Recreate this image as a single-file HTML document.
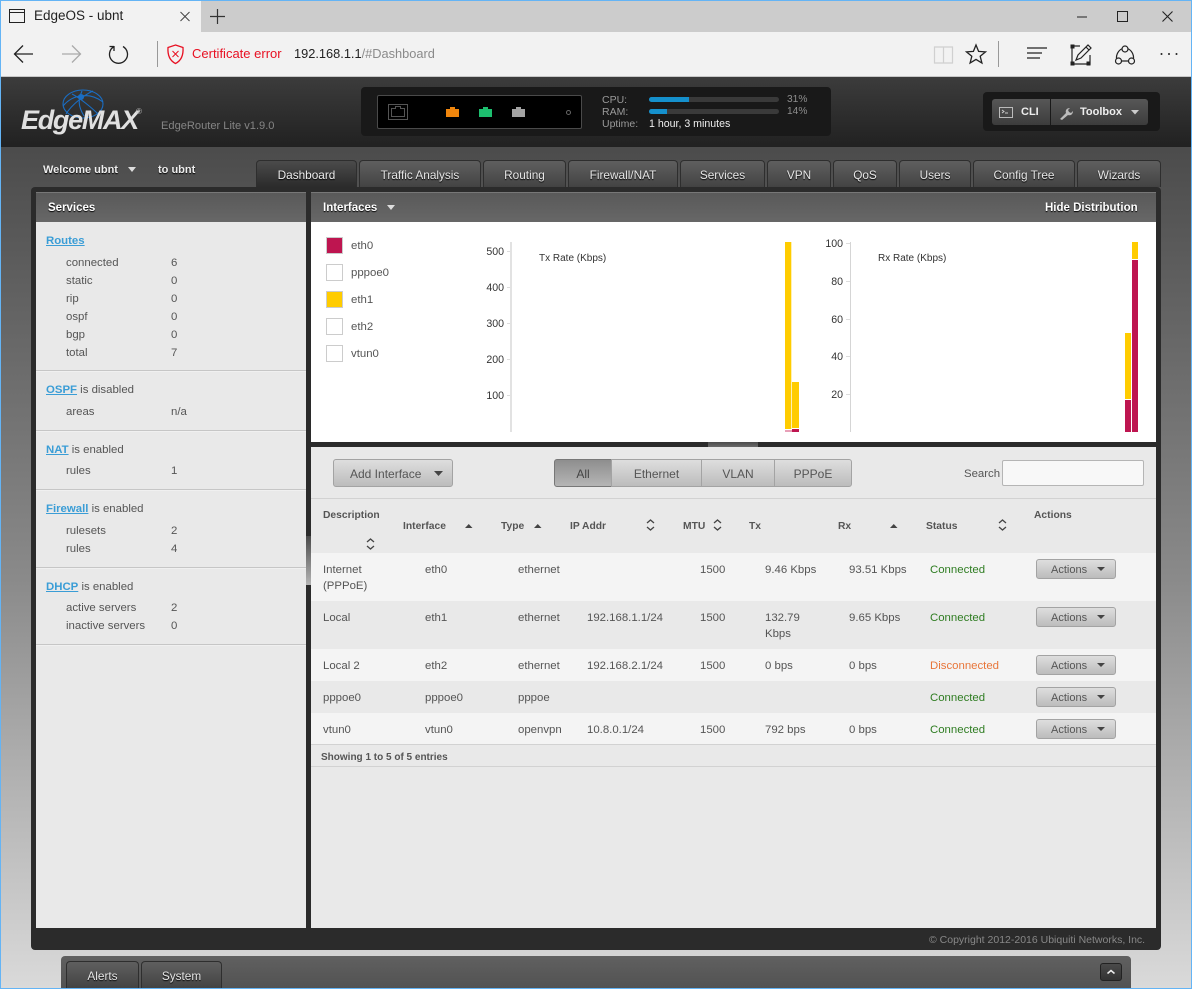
<!DOCTYPE html>
<html><head><meta charset="utf-8"><title>EdgeOS - ubnt</title>
<style>
html,body{margin:0;padding:0;width:1192px;height:989px;overflow:hidden;background:#ccc}
body{position:relative;font-family:"Liberation Sans",sans-serif;font-size:11.4px;color:#555}
div,span.t,a.t,b.t{position:absolute;box-sizing:border-box}
.t{position:absolute;white-space:nowrap;line-height:16px;height:16px;margin-top:1px}
svg{position:absolute;overflow:visible}
.tab{top:160px;height:27px;border:1px solid #2e2e2e;border-bottom:0;border-radius:4px 4px 0 0;background:linear-gradient(#5f5f5f,#434343);color:#e6e6e6;text-align:center;line-height:28px;font-size:11.8px;text-shadow:0 1px 1px #000;font-weight:normal}
.tab.on{background:linear-gradient(#4b4b4b,#2b2b2b);color:#eee}
.sep{left:36px;width:270px;height:2px;background:#c6c6c6;border-bottom:1px solid #f0f0f0}
.lnk{color:#3a9dd6;font-weight:bold;text-decoration:underline}
.btn{background:linear-gradient(#dedede,#bcbcbc);border:1px solid #a3a3a3;color:#555;text-align:center;line-height:28px;font-size:12px}
.act{left:1036px;width:80px;height:20px;border:1px solid #a3a3a3;border-radius:3px;background:linear-gradient(#dedede,#bcbcbc);color:#555;font-size:11px;line-height:20px;padding-left:14px}
.act:after{content:"";position:absolute;left:60px;top:7px;border:4.5px solid transparent;border-top:4.5px solid #444;border-bottom:0}
.h{color:#555;font-size:10.3px;font-weight:bold}
.r{height:1px}
.ax{color:#333;font-size:10.6px;text-align:right;width:30px}
.w{color:#fff}
.lg{left:326px;width:17px;height:17px;border:1px solid #ccc;background:#fff}
.gr{color:#2f7d22}
.ph{font-weight:bold;font-size:11.5px;text-shadow:0 1px 1px #000}
</style></head><body>

<!-- browser chrome -->
<div style="left:0;top:0;width:1192px;height:32px;background:#ccc"></div>
<div style="left:0;top:0;width:201px;height:32px;background:#f2f2f2"></div>
<div style="left:0;top:32px;width:1192px;height:44px;background:#f2f2f2"></div>
<div style="left:0;top:76px;width:1192px;height:1px;background:#c8c8c8"></div>
<span class="t" style="left:34px;top:7px;font-size:13.5px;color:#222">EdgeOS - ubnt</span>
<span class="t" style="left:192px;top:45px;font-size:13px;color:#e81123">Certificate error</span>
<span class="t" style="left:294px;top:45px;font-size:12.8px;color:#222">192.168.1.1<span style="color:#8a8a8a">/#Dashboard</span></span>

<!-- page -->
<div style="left:0;top:77px;width:1192px;height:912px;background:linear-gradient(#4c4c4c 0,#4c4c4c 8%,#8a8a8a 55%,#dadada 100%)"></div>
<div style="left:0;top:77px;width:1192px;height:70px;background:linear-gradient(#3c3c3c,#212121)"></div>

<!-- logo -->
<svg width="60" height="40" style="left:58px;top:86px" fill="none" stroke="#1a6ec4" stroke-width="1.100">
<ellipse cx="25" cy="18" rx="20" ry="14"/><path d="M5 20C15 8 32 6 45 16M8 28C14 18 28 8 35 5M24 5C20 14 20 20 26 30M14 8C22 12 34 22 40 28"/><circle cx="23" cy="11" r="2.500" fill="#1a6ec4"/>
</svg>
<span class="t" style="left:21px;top:101px;height:36px;line-height:36px;font-size:27px;font-weight:bold;font-style:italic;letter-spacing:-1.300px;color:#e0e0e0">EdgeMAX</span>
<span class="t" style="left:136px;top:103px;font-size:8px;color:#bbb">®</span>
<span class="t" style="left:161px;top:117px;color:#858585;font-size:11.1px">EdgeRouter Lite v1.9.0</span>

<!-- status panel -->
<div style="left:361px;top:87px;width:470px;height:49px;background:#191919;border-radius:4px"></div>
<div style="left:377px;top:95px;width:205px;height:34px;background:#000;border:1px solid #4a4a4a;border-radius:2px"></div>
<svg width="205" height="34" style="left:377px;top:95px" fill="none">
<rect x="11.500" y="9.500" width="19" height="15" stroke="#555"/>
<path d="M14.500 21.500V13.500H18.500V11.500H23.500V13.500H27.500V21.500Z" stroke="#555"/>
<path d="M69 14V22H82V14H78V12H73V14Z" fill="#f0860d"/>
<path d="M102 14V22H115V14H111V12H106V14Z" fill="#1dbf6f"/>
<path d="M135 14V22H148V14H144V12H139V14Z" fill="#a3a3a3"/>
<circle cx="191.500" cy="17.500" r="2" stroke="#666"/>
</svg>
<span class="t" style="left:602px;top:91px;font-size:10.5px;color:#9a9a9a">CPU:</span>
<span class="t" style="left:602px;top:103px;font-size:10.5px;color:#9a9a9a">RAM:</span>
<span class="t" style="left:602px;top:115px;font-size:10.5px;color:#9a9a9a">Uptime:</span>
<div style="left:649px;top:97px;width:130px;height:5px;background:#3a3a3a;border-radius:3px"></div>
<div style="left:649px;top:97px;width:40px;height:5px;background:#1590cc;border-radius:3px 0 0 3px"></div>
<div style="left:649px;top:109px;width:130px;height:5px;background:#3a3a3a;border-radius:3px"></div>
<div style="left:649px;top:109px;width:18px;height:5px;background:#1590cc;border-radius:3px 0 0 3px"></div>
<span class="t" style="left:787px;top:91px;font-size:10.2px;color:#8e8e8e">31%</span>
<span class="t" style="left:787px;top:103px;font-size:10.2px;color:#8e8e8e">14%</span>
<span class="t" style="left:649px;top:115px;font-size:10.6px;color:#eee">1 hour, 3 minutes</span>

<!-- toolbox -->
<div style="left:983px;top:92px;width:177px;height:39px;background:#191919;border-radius:4px"></div>
<div style="left:992px;top:99px;width:58px;height:26px;background:linear-gradient(#575757,#3c3c3c);border-radius:3px 0 0 3px"></div>
<div style="left:1051px;top:99px;width:97px;height:26px;background:linear-gradient(#575757,#3c3c3c);border-radius:0 3px 3px 0"></div>
<span class="t" style="left:1021px;top:103px;color:#eee;font-weight:bold;font-size:11px">CLI</span>
<span class="t" style="left:1080px;top:103px;color:#eee;font-weight:bold;font-size:11px">Toolbox</span>
<svg width="180" height="30" style="left:992px;top:99px" fill="none">
<rect x="7.500" y="8.500" width="13" height="10" stroke="#bbb"/><path d="M10 11l2 1.500-2 1.500M13 14h3" stroke="#ccc"/>
<path d="M68 20l6-6c-1-3 1-5 4-5l-2 2 1 2 2 1 2-2c0 3-2 5-5 4l-6 5z" fill="#bbb"/>
<path d="M139 11h8l-4 4.500z" fill="#ccc"/>
</svg>

<!-- welcome -->
<span class="t" style="left:43px;top:161px;color:#eee;font-size:11px;font-weight:bold;text-shadow:0 1px 1px #000">Welcome ubnt</span>
<svg width="10" height="6" style="left:128px;top:167px"><path d="M0 0h8l-4 5z" fill="#ddd"/></svg>
<span class="t" style="left:158px;top:161px;color:#eee;font-size:11px;font-weight:bold;text-shadow:0 1px 1px #000">to ubnt</span>

<!-- main tabs -->
<div class="tab on" style="left:256px;width:101px">Dashboard</div>
<div class="tab" style="left:359px;width:122px">Traffic Analysis</div>
<div class="tab" style="left:483px;width:83px">Routing</div>
<div class="tab" style="left:568px;width:110px">Firewall/NAT</div>
<div class="tab" style="left:680px;width:85px">Services</div>
<div class="tab" style="left:767px;width:64px">VPN</div>
<div class="tab" style="left:833px;width:64px">QoS</div>
<div class="tab" style="left:899px;width:72px">Users</div>
<div class="tab" style="left:973px;width:102px">Config Tree</div>
<div class="tab" style="left:1077px;width:84px">Wizards</div>

<!-- main panel -->
<div style="left:31px;top:187px;width:1130px;height:763px;background:#2b2b2b;border-radius:4px"></div>
<div style="left:36px;top:192px;width:270px;height:30px;background:linear-gradient(#595959,#676767);border-top:1px solid #777"></div>
<div style="left:311px;top:192px;width:845px;height:30px;background:linear-gradient(#595959,#676767);border-top:1px solid #777"></div>
<span class="t w ph" style="left:48px;top:199px">Services</span>
<span class="t w ph" style="left:323px;top:199px">Interfaces</span>
<svg width="10" height="6" style="left:387px;top:205px"><path d="M0 0h8l-4 5z" fill="#ddd"/></svg>
<span class="t w ph" style="left:1045px;top:199px">Hide Distribution</span>

<!-- sidebar -->
<div style="left:36px;top:222px;width:270px;height:706px;background:#e9e9e9"></div>
<div class="sep" style="top:370px"></div>
<div class="sep" style="top:430px"></div>
<div class="sep" style="top:489px"></div>
<div class="sep" style="top:567px"></div>
<div class="sep" style="top:644px"></div>
<div style="left:306px;top:536px;width:5px;height:49px;background:linear-gradient(#4a4a4a,#b5b5b5)"></div>

<span class="t lnk" style="left:46px;top:232px">Routes</span>
<span class="t" style="left:66px;top:254px">connected</span><span class="t" style="left:171px;top:254px">6</span>
<span class="t" style="left:66px;top:272px">static</span><span class="t" style="left:171px;top:272px">0</span>
<span class="t" style="left:66px;top:290px">rip</span><span class="t" style="left:171px;top:290px">0</span>
<span class="t" style="left:66px;top:308px">ospf</span><span class="t" style="left:171px;top:308px">0</span>
<span class="t" style="left:66px;top:326px">bgp</span><span class="t" style="left:171px;top:326px">0</span>
<span class="t" style="left:66px;top:344px">total</span><span class="t" style="left:171px;top:344px">7</span>

<span class="t" style="left:46px;top:381px"><span class="lnk">OSPF</span> is disabled</span>
<span class="t" style="left:66px;top:403px">areas</span><span class="t" style="left:171px;top:403px">n/a</span>

<span class="t" style="left:46px;top:441px"><span class="lnk">NAT</span> is enabled</span>
<span class="t" style="left:66px;top:462px">rules</span><span class="t" style="left:171px;top:462px">1</span>

<span class="t" style="left:46px;top:500px"><span class="lnk">Firewall</span> is enabled</span>
<span class="t" style="left:66px;top:522px">rulesets</span><span class="t" style="left:171px;top:522px">2</span>
<span class="t" style="left:66px;top:540px">rules</span><span class="t" style="left:171px;top:540px">4</span>

<span class="t" style="left:46px;top:578px"><span class="lnk">DHCP</span> is enabled</span>
<span class="t" style="left:66px;top:599px">active servers</span><span class="t" style="left:171px;top:599px">2</span>
<span class="t" style="left:66px;top:617px">inactive servers</span><span class="t" style="left:171px;top:617px">0</span>

<!-- chart area -->
<div style="left:311px;top:222px;width:845px;height:220px;background:#fff"></div>
<div class="lg" style="top:237px;background:#be1550"></div><span class="t" style="left:351px;top:237px">eth0</span>
<div class="lg" style="top:264px"></div><span class="t" style="left:351px;top:264px">pppoe0</span>
<div class="lg" style="top:291px;background:#ffcc00"></div><span class="t" style="left:351px;top:291px">eth1</span>
<div class="lg" style="top:318px"></div><span class="t" style="left:351px;top:318px">eth2</span>
<div class="lg" style="top:345px"></div><span class="t" style="left:351px;top:345px">vtun0</span>

<div style="left:510px;top:242px;width:2px;height:190px;background:#e2e2e2"></div>
<div class="r" style="left:507px;top:251px;width:3px;background:#ddd"></div>
<div class="r" style="left:507px;top:287px;width:3px;background:#ddd"></div>
<div class="r" style="left:507px;top:323px;width:3px;background:#ddd"></div>
<div class="r" style="left:507px;top:359px;width:3px;background:#ddd"></div>
<div class="r" style="left:507px;top:395px;width:3px;background:#ddd"></div>
<span class="t ax" style="left:474px;top:243px">500</span>
<span class="t ax" style="left:474px;top:279px">400</span>
<span class="t ax" style="left:474px;top:315px">300</span>
<span class="t ax" style="left:474px;top:351px">200</span>
<span class="t ax" style="left:474px;top:387px">100</span>
<span class="t" style="left:539px;top:250px;color:#333;font-size:10px">Tx Rate (Kbps)</span>

<div style="left:785px;top:242px;width:7px;height:187px;background:#ffcc00;border-right:1px solid #fff0b0"></div>
<div style="left:785px;top:430px;width:7px;height:2px;background:#e8a0b8"></div>
<div style="left:792px;top:382px;width:7px;height:46px;background:#ffcc00"></div>
<div style="left:792px;top:429px;width:7px;height:3px;background:#be1550"></div>

<div style="left:850px;top:242px;width:1px;height:190px;background:#d5d5d5"></div>
<div class="r" style="left:846px;top:243px;width:4px;background:#ddd"></div>
<div class="r" style="left:846px;top:281px;width:4px;background:#ddd"></div>
<div class="r" style="left:846px;top:319px;width:4px;background:#ddd"></div>
<div class="r" style="left:846px;top:356px;width:4px;background:#ddd"></div>
<div class="r" style="left:846px;top:394px;width:4px;background:#ddd"></div>
<span class="t ax" style="left:813px;top:235px">100</span>
<span class="t ax" style="left:813px;top:273px">80</span>
<span class="t ax" style="left:813px;top:311px">60</span>
<span class="t ax" style="left:813px;top:348px">40</span>
<span class="t ax" style="left:813px;top:386px">20</span>
<span class="t" style="left:878px;top:250px;color:#333;font-size:10px">Rx Rate (Kbps)</span>

<div style="left:1125px;top:333px;width:6px;height:66px;background:#ffcc00"></div>
<div style="left:1125px;top:400px;width:6px;height:32px;background:#be1550"></div>
<div style="left:1132px;top:242px;width:6px;height:17px;background:#ffcc00"></div>
<div style="left:1132px;top:260px;width:6px;height:172px;background:#be1550"></div>

<div style="left:708px;top:442px;width:50px;height:5px;background:linear-gradient(#4c4c4c,#6a6a6a)"></div>

<!-- table area -->
<div style="left:311px;top:447px;width:845px;height:481px;background:#e9e9e9"></div>
<div style="left:311px;top:498px;width:845px;height:1px;background:#d2d2d2"></div>

<div class="btn" style="left:333px;top:459px;width:120px;height:28px;border-radius:3px;text-align:left;padding-left:16px">Add Interface</div>
<svg width="10" height="6" style="left:434px;top:471px"><path d="M0 0h9l-4.500 5z" fill="#444"/></svg>
<div class="btn" style="left:554px;top:459px;width:58px;height:28px;border-radius:3px 0 0 3px;background:linear-gradient(#8e8e8e,#b5b5b5);border-color:#777;color:#444">All</div>
<div class="btn" style="left:611px;top:459px;width:91px;height:28px">Ethernet</div>
<div class="btn" style="left:701px;top:459px;width:74px;height:28px">VLAN</div>
<div class="btn" style="left:774px;top:459px;width:78px;height:28px;border-radius:0 3px 3px 0">PPPoE</div>
<span class="t" style="left:964px;top:465px">Search</span>
<div style="left:1002px;top:460px;width:142px;height:26px;background:#f8f8f8;border:1px solid #b5b5b5;border-radius:2px"></div>

<span class="t h" style="left:323px;top:507px">Description</span>
<span class="t h" style="left:403px;top:518px">Interface</span>
<span class="t h" style="left:501px;top:518px">Type</span>
<span class="t h" style="left:570px;top:518px">IP Addr</span>
<span class="t h" style="left:683px;top:518px">MTU</span>
<span class="t h" style="left:749px;top:518px">Tx</span>
<span class="t h" style="left:838px;top:518px">Rx</span>
<span class="t h" style="left:926px;top:518px">Status</span>
<span class="t h" style="left:1034px;top:507px">Actions</span>
<svg width="1192" height="989" style="left:0;top:0" fill="none" stroke="#444" stroke-width="1.300">
<path d="M367 542l3.500-3 3.500 3M367 546l3.500 3 3.500-3"/>
<path d="M647 523l3.500-3 3.500 3M647 527l3.500 3 3.500-3"/>
<path d="M714 523l3.500-3 3.500 3M714 527l3.500 3 3.500-3"/>
<path d="M999 523l3.500-3 3.500 3M999 527l3.500 3 3.500-3"/>
<path d="M465 528h7.500l-3.750-4z M534 528h7.500l-3.750-4z M890 528h7.500l-3.750-4z" fill="#444" stroke="none"/>
</svg>

<div style="left:311px;top:553px;width:845px;height:48px;background:#f4f4f4"></div>
<div style="left:311px;top:649px;width:845px;height:32px;background:#f4f4f4"></div>
<div style="left:311px;top:713px;width:845px;height:31px;background:#f4f4f4"></div>
<div style="left:311px;top:744px;width:845px;height:1px;background:#d2d2d2"></div>
<div style="left:311px;top:766px;width:845px;height:1px;background:#d2d2d2"></div>

<span class="t" style="left:323px;top:561px">Internet</span><span class="t" style="left:323px;top:577px">(PPPoE)</span>
<span class="t" style="left:425px;top:561px">eth0</span><span class="t" style="left:518px;top:561px">ethernet</span>
<span class="t" style="left:700px;top:561px">1500</span><span class="t" style="left:765px;top:561px">9.46 Kbps</span><span class="t" style="left:849px;top:561px">93.51 Kbps</span><span class="t gr" style="left:930px;top:561px">Connected</span>
<div class="act" style="top:559px">Actions</div>

<span class="t" style="left:323px;top:609px">Local</span><span class="t" style="left:425px;top:609px">eth1</span><span class="t" style="left:518px;top:609px">ethernet</span><span class="t" style="left:587px;top:609px">192.168.1.1/24</span>
<span class="t" style="left:700px;top:609px">1500</span><span class="t" style="left:765px;top:609px">132.79</span><span class="t" style="left:765px;top:625px">Kbps</span><span class="t" style="left:849px;top:609px">9.65 Kbps</span><span class="t gr" style="left:930px;top:609px">Connected</span>
<div class="act" style="top:607px">Actions</div>

<span class="t" style="left:323px;top:657px">Local 2</span><span class="t" style="left:425px;top:657px">eth2</span><span class="t" style="left:518px;top:657px">ethernet</span><span class="t" style="left:587px;top:657px">192.168.2.1/24</span>
<span class="t" style="left:700px;top:657px">1500</span><span class="t" style="left:765px;top:657px">0 bps</span><span class="t" style="left:849px;top:657px">0 bps</span><span class="t" style="left:930px;top:657px;color:#e8763a">Disconnected</span>
<div class="act" style="top:655px">Actions</div>

<span class="t" style="left:323px;top:689px">pppoe0</span><span class="t" style="left:425px;top:689px">pppoe0</span><span class="t" style="left:518px;top:689px">pppoe</span><span class="t gr" style="left:930px;top:689px">Connected</span>
<div class="act" style="top:687px">Actions</div>

<span class="t" style="left:323px;top:721px">vtun0</span><span class="t" style="left:425px;top:721px">vtun0</span><span class="t" style="left:518px;top:721px">openvpn</span><span class="t" style="left:587px;top:721px">10.8.0.1/24</span>
<span class="t" style="left:700px;top:721px">1500</span><span class="t" style="left:765px;top:721px">792 bps</span><span class="t" style="left:849px;top:721px">0 bps</span><span class="t gr" style="left:930px;top:721px">Connected</span>
<div class="act" style="top:719px">Actions</div>

<span class="t" style="left:321px;top:749px;font-size:10px;font-weight:bold;color:#555">Showing 1 to 5 of 5 entries</span>
<span class="t" style="left:929px;top:931px;font-size:10.5px;color:#888">© Copyright 2012-2016 Ubiquiti Networks, Inc.</span>

<!-- bottom bar -->
<div style="left:61px;top:956px;width:1070px;height:33px;background:linear-gradient(#606060,#525252);border-radius:4px 4px 0 0"></div>
<div class="tab" style="left:66px;top:961px;width:73px">Alerts</div>
<div class="tab" style="left:141px;top:961px;width:81px">System</div>
<div style="left:1100px;top:963px;width:22px;height:18px;background:linear-gradient(#4a4a4a,#333);border:1px solid #222;border-radius:3px"></div>
<svg width="22" height="18" style="left:1100px;top:963px"><path d="M7.500 10.500l3.500-3 3.500 3" fill="none" stroke="#eee" stroke-width="1.500"/></svg>

<!-- chrome icons -->
<svg width="1192" height="77" style="left:0;top:0" fill="none" stroke="#222" stroke-width="1">
<rect x="9.500" y="9.500" width="15" height="13"/><path d="M9.500 12.500h15"/>
<path d="M180.500 12l9 9M189.500 12l-9 9" stroke="#444"/>
<path d="M217.500 9v15M210 16.500h15" stroke="#333" stroke-width="1.200"/>
<path d="M1077 17h10" stroke="#222"/>
<rect x="1117.500" y="11.500" width="10" height="10"/>
<path d="M1162.500 11.500l10 10M1172.500 11.500l-10 10" stroke-width="1.100"/>
<path d="M157.500 41v26" stroke="#999"/>
<path d="M998.500 41v26" stroke="#999"/>
<g transform="translate(0,-1)">
<path d="M33 55H15M23 46.500L14.500 55L23 63.500" stroke-width="1.300"/>
<path d="M62 55H80M72 46.500L80.500 55L72 63.500" stroke="#aaa" stroke-width="1.300"/>
<path d="M114 47.500A9 9 0 1 0 123 47.500M114 47v5M114 47.500h-4.500" stroke-width="1.300"/>
<path d="M175.500 46l7.500 2.500c.5 7-1.500 13-7.500 16-6-3-8-9-7.500-16z" stroke="#e81123" stroke-width="1.300"/>
<path d="M172.500 52l6 6M178.500 52l-6 6" stroke="#e81123"/>
<path d="M934.500 48h9v16h-9zM943.500 48h9v16h-9z" stroke="#d0d0d0" stroke-width="1.200"/>
<path d="M976 46l2.600 6.400 6.900.5-5.300 4.400 1.700 6.700-5.900-3.600-5.900 3.600 1.700-6.700-5.300-4.400 6.900-.5z" stroke-width="1.300"/>
<path d="M1080 47h-8v18h18v-9M1076 61l2-5 10-10 3 3-10 10zM1086 48l3 3" stroke-width="1.200"/>
<rect x="1071" y="46" width="3" height="3" fill="#222"/><rect x="1071" y="63" width="3" height="3" fill="#222"/><rect x="1087" y="63" width="3" height="3" fill="#222"/>
<circle cx="1125" cy="50" r="3" stroke-width="1.200"/><circle cx="1118.500" cy="62" r="3" stroke-width="1.200"/><circle cx="1131.500" cy="62" r="3" stroke-width="1.200"/>
<path d="M1121 62h7M1122.500 49.500A10 10 0 0 0 1116.500 59.500M1127.500 49.500A10 10 0 0 1 1133.500 59.500" stroke-width="1.200"/>
<circle cx="1161.500" cy="55" r="1" fill="#222" stroke="none"/><circle cx="1169" cy="55" r="1" fill="#222" stroke="none"/><circle cx="1176.500" cy="55" r="1" fill="#222" stroke="none"/>
</g>
<path d="M1027 48h20M1027 53h15M1027 58h13" stroke-width="1.200"/>
</svg>

<!-- window border -->
<div style="left:0;top:0;width:1192px;height:1px;background:#64b4f5"></div>
<div style="left:0;top:0;width:1px;height:989px;background:#64b4f5"></div>
<div style="left:1191px;top:0;width:1px;height:989px;background:#64b4f5"></div>
<div style="left:0;top:988px;width:1192px;height:1px;background:#64b4f5"></div>
</body></html>
